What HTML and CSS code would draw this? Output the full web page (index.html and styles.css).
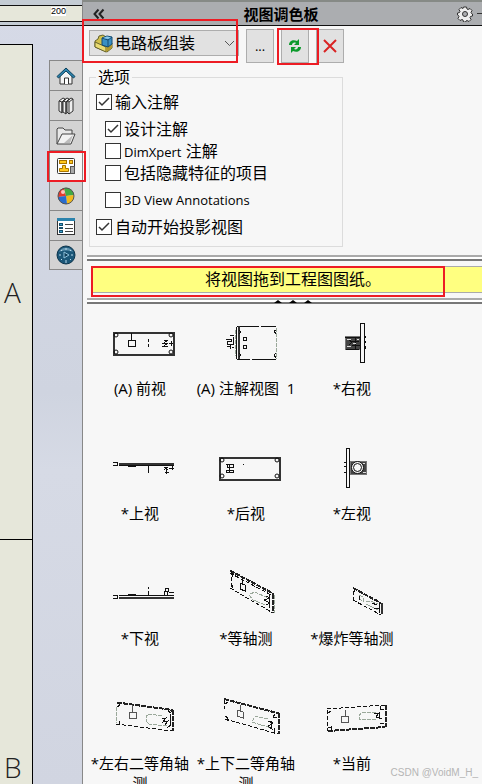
FILE: index.html
```html
<!DOCTYPE html>
<html lang="zh-CN">
<head>
    <meta charset="utf-8">
    <meta name="viewport" content="width=device-width, initial-scale=1.0">
    <title>视图调色板</title>
    <link rel="stylesheet" href="styles.css">
</head>
<body>
    <div class="workspace">
        <div class="ruler"><span class="ruler-num">200</span></div>
        <div class="canvas">
            <div class="sheet">
                <div class="zone zone-a">A</div>
                <div class="zone zone-b">B</div>
            </div>
            <nav class="tabs">
                <button type="button" class="tab" aria-label="主页">
                    <svg width="20" height="20" viewBox="0 0 20 20"><path d="M4 9v9h12V9l-6-5z" fill="#f4f4f4" stroke="#333"/><path d="M8.500 18v-6h4v6" fill="#fff" stroke="#333"/><path d="M1 10.500L10 2l9 8.500-1.500 1.500L10 5l-7.500 7z" fill="#2d83ad" stroke="#0e415c"/></svg>
                </button>
                <button type="button" class="tab" aria-label="设计库">
                    <svg width="20" height="20" viewBox="0 0 20 20"><g fill="#eee" stroke="#333"><path d="M11 5l4-3 2 1v12l-4 3-2-2z"/><path d="M7 5l4-3 2 1-3 3v12l-3-2z"/><path d="M3 5l4-3 2 1-3 3v11l-3-2z"/><path d="M3 5l3 1v11M7 5l3 1v12M11 5l2 1v12M13 6l4-3M6 6l4-3M10 6l4-3" fill="none"/></g></svg>
                </button>
                <button type="button" class="tab" aria-label="文件探索器">
                    <svg width="20" height="20" viewBox="0 0 20 20"><path d="M1 18V3l1-1h5l2 2h7v4" fill="#e8e8e8" stroke="#444"/><path d="M1 18l5-10h13l-4 10z" fill="#f2f2f2" stroke="#444"/><path d="M8 17l9-8-3 8z" fill="#bbb"/></svg>
                </button>
                <button type="button" class="tab tab-active" aria-label="视图调色板">
                    <svg width="20" height="20" viewBox="0 0 20 20"><rect x="1.500" y="2.500" width="17" height="15" rx="1" fill="#fff" stroke="#333"/><g fill="#ffc81e" stroke="#a87400"><rect x="3.500" y="4.500" width="7" height="3"/><rect x="13.500" y="4.500" width="3" height="3"/><path d="M6.500 9.500h3v3h3v3h-9v-3h3z"/></g><rect x="14.500" y="10.500" width="4" height="7" fill="#aaa" stroke="#555"/></svg>
                    <span class="mark mark-tab"></span>
                </button>
                <button type="button" class="tab" aria-label="外观">
                    <svg width="20" height="20" viewBox="0 0 20 20"><path d="M10 10L8 2a8 8 0 0 0-6 9z" fill="#e33b2e"/><path d="M10 10L8 2a8 8 0 0 1 10 7z" fill="#42a944"/><path d="M10 10l8-1a8 8 0 0 1-7 9z" fill="#f0b91d"/><path d="M10 10l1 8a8 8 0 0 1-9-7z" fill="#286ccf"/><circle cx="7" cy="6" r="2" fill="#fff" opacity=".7"/><circle cx="10" cy="10" r="8" fill="none" stroke="#555"/></svg>
                </button>
                <button type="button" class="tab" aria-label="自定义属性">
                    <svg width="20" height="20" viewBox="0 0 20 20"><rect x="1.500" y="2.500" width="17" height="16" fill="#fff" stroke="#333"/><path d="M1 2h18v3H1z" fill="#2c83ac"/><g fill="#3da0cd" stroke="#17506d"><rect x="3.500" y="7.500" width="3" height="2"/><rect x="3.500" y="11.500" width="3" height="1"/><rect x="3.500" y="14.500" width="3" height="2"/></g><path d="M9 8.500h8M9 12.500h8M9 15.500h8" stroke="#444"/></svg>
                </button>
                <button type="button" class="tab" aria-label="论坛">
                    <svg width="20" height="20" viewBox="0 0 20 20"><circle cx="10" cy="10" r="9" fill="#1b5778" stroke="#0c344b"/><path d="M3 7a8 8 0 0 1 14 0c-4-2-10-2-14 0z" fill="#6296b1"/><path d="M8 7l5 3-5 3z" fill="#103e58" stroke="#8ec2dc"/><path d="M10 3v2M3 10h2M15 10h2M10 15v3M5 5l1 1M15 5l-1 1M5 15l1-1M15 15l-1-1" stroke="#b7d8e8"/></svg>
                </button>
            </nav>
        </div>
    </div>

    <main class="panel">
        <header class="panel-head">
            <button type="button" class="head-btn" aria-label="折叠">
                <svg width="12" height="12" viewBox="0 0 12 12"><path d="M5.500 1.500L1.500 6l4 4.500M10.500 1.500L6.500 6l4 4.500" fill="none" stroke="#222" stroke-width="2"/></svg>
            </button>
            <h1 class="panel-title">视图调色板</h1>
            <button type="button" class="head-btn" aria-label="设置">
                <svg width="16" height="16" viewBox="0 0 16 16"><path d="M6.500 1h3l.5 2 1 .5 2-1 2 2-1 2 .5 1 1 .5v2l-2 .5-.5 1 1 2-2 2-2-1-1 .5-.5 1h-2L6 14l-1-.500-2 1-2-2 1-2-.500-1L.500 9V7l2-.500.500-1-1-2 2-2 2 1z" fill="#eee" stroke="#333"/><circle cx="8" cy="8" r="2.500" fill="#abadb0" stroke="#333"/></svg>
            </button>
            <span class="head-dash"></span>
        </header>

        <div class="toolbar">
            <div class="picker">
                <svg class="picker-icon" width="19" height="19" viewBox="0 0 19 19"><path d="M1 7l3-2 1-3 4-1 3 2v4l6 2v5l-5 4L1 13z" fill="#d2c14b" stroke="#66642d"/><path d="M1 8l11 5v5L1 13z" fill="#eadc72" stroke="#66642d"/><path d="M12 13l6-3v4l-6 4z" fill="#b19a30"/><path d="M8 4l5-2 5 1v7l-4 3-6-2z" fill="#3990c4" stroke="#164c72"/><path d="M8 4l6 2v7M14 6l4-3" fill="none" stroke="#164c72"/><path d="M9 4l4-1.500 4 1-3 1.500z" fill="#8ccaea"/></svg>
                <select class="picker-select" aria-label="零件">
                    <option>电路板组装</option>
                </select>
                <svg class="picker-arrow" width="11" height="7" viewBox="0 0 11 7"><path d="M1 1l4.500 4.500L10 1" fill="none" stroke="#555"/></svg>
                <span class="mark mark-picker"></span>
            </div>
            <button type="button" class="tool">...</button>
            <button type="button" class="tool" aria-label="刷新">
                <svg width="14" height="16" viewBox="0 0 14 16"><g fill="#0b9a2b"><path d="M1 7c0-4 4-6 8-4l2-2v6H6l2-2C6 4 4 5 4 7z"/><path d="M13 9c0 4-4 6-8 4l-2 2V9h5l-2 2c2 1 4 0 4-2z"/></g></svg>
                <span class="mark mark-tool"></span>
            </button>
            <button type="button" class="tool" aria-label="全部清除">
                <svg width="14" height="14" viewBox="0 0 14 14"><path d="M1 1l12 12M13 1L1 13" stroke="#d92323" stroke-width="2"/></svg>
            </button>
        </div>

        <fieldset class="options">
            <legend>选项</legend>
            <label class="opt"><input type="checkbox" checked>输入注解</label>
            <label class="opt opt-sub opt-gap"><input type="checkbox" checked>设计注解</label>
            <label class="opt opt-sub"><input type="checkbox"><span><span class="latin">DimXpert</span> 注解</span></label>
            <label class="opt opt-sub"><input type="checkbox">包括隐藏特征的项目</label>
            <label class="opt opt-sub opt-gap"><input type="checkbox"><span class="latin">3D View Annotations</span></label>
            <label class="opt opt-gap"><input type="checkbox" checked>自动开始投影视图</label>
        </fieldset>

        <div class="splitter"></div>
        <div class="hint">
            <p class="hint-text">将视图拖到工程图图纸。</p>
            <span class="mark mark-hint"></span>
        </div>
        <div class="splitter splitter-grip">
            <svg width="38" height="3" viewBox="0 0 38 3"><path d="M0 3l4-3 4 3zM15 3l4-3 4 3zM30 3l4-3 4 3z"/></svg>
        </div>

        <section class="views">
            <figure class="view">
                <svg class="thumb" viewBox="0 0 80 70"><rect class="thick" x="13.500" y="24.500" width="60" height="22"/><circle cx="16" cy="27" r="2"/><circle cx="71" cy="27" r="2"/><circle cx="16" cy="44" r="2"/><circle cx="71" cy="44" r="2"/><path d="M31.500 25v7M28.500 32.500h7v6h-7zM48.500 31v3M48.500 36v3M64 32h4l-4 3h4l-4 3h4M69 35h4M71 33v5"/></svg>
                <figcaption>(A) 前视</figcaption>
            </figure>
            <figure class="view">
                <svg class="thumb" viewBox="0 0 80 70"><path d="M31 18.500h22M55 18.500h15M31 51.500h13M46 51.500h24M30.500 19v32"/><path class="thick" d="M32.500 18v33"/><path class="soft" d="M70.500 20v31M29.500 22v26"/><path d="M33 22l2 2-2 2M70 22l-2 1 2 3M33 45l2 2-2 2M70 45l-2 2 2 3M37.500 29.500h3v3h-3zM37.500 37.500h3v3h-3zM20 31h5v2h-4v3h6M27 29v8M21 39l3-1v3M26 39h2M24 27l4 1"/></svg>
                <figcaption>(A) 注解视图  1</figcaption>
            </figure>
            <figure class="view">
                <svg class="thumb" viewBox="0 0 80 70"><rect x="33" y="28" width="15" height="13" class="chip"/><path d="M33 29h15M34 41h13M37 32l3 2-3 3M43 29v12M40 33h7M40 37h8M53 28v2M53 33v2M53 38v3"/><path class="white" d="M35 31h4M41 35h3M35 38h4M45 31h2"/><rect class="slab" x="48.500" y="15.500" width="4" height="39" rx="1"/></svg>
                <figcaption>*右视</figcaption>
            </figure>
            <figure class="view">
                <svg class="thumb" viewBox="0 0 80 70"><path class="thick" d="M19 30.500h55"/><path d="M13 29.500h4v3h-4M19 32.500h55M28 33h8M48.500 33v7M64 34l4 3M68 34l-4 3M66.500 37v4M69 35.500h5M72 33v4M65 39.500h4"/></svg>
                <figcaption>*上视</figcaption>
            </figure>
            <figure class="view">
                <svg class="thumb" viewBox="0 0 80 70"><rect class="thick" x="13.500" y="24.500" width="60" height="22"/><circle cx="16" cy="27" r="2"/><circle cx="71" cy="27" r="2"/><circle cx="16" cy="43" r="2"/><circle cx="71" cy="43" r="2"/><path d="M21 31.500h6v3h-5zM20 37.500h7v2h-7zM23 31v9M37 31h1"/></svg>
                <figcaption>*后视</figcaption>
            </figure>
            <figure class="view">
                <svg class="thumb" viewBox="0 0 80 70"><rect x="38" y="28" width="16" height="13" class="chip"/><circle class="slab" cx="45.500" cy="34.500" r="6"/><circle cx="45.500" cy="34.500" r="4"/><path class="white" d="M51 30h2M51 39h3"/><path d="M32 29h2M32 33h2M32 39h2"/><rect class="slab" x="34.500" y="15.500" width="3" height="39"/></svg>
                <figcaption>*左视</figcaption>
            </figure>
            <figure class="view">
                <svg class="thumb" viewBox="0 0 80 70"><path class="thick" d="M19 39.500h55"/><path d="M13 37.500h4v3h-4M19 37.500h55M28 36.500h8M48.500 29v2M48.500 33v4M65 30h3v3h-3zM64 33v4M67 33v4M69 34.500h5"/></svg>
                <figcaption>*下视</figcaption>
            </figure>
            <figure class="view">
                <svg class="thumb" viewBox="0 0 80 70"><path class="edge" d="M24 12.500L68 36"/><path class="dash" d="M24 15L67 38M24 30l43 25M25 13v18"/><path class="edge" d="M66.500 36v19"/><path class="soft" d="M68.500 37v18M44 36l5-2 13 6M43 37l4 5 12 5"/><path d="M36 20v6M34 25l5 2v6l-5-2zM26 15v4M26 27v3M60 38l4 2-6 2 6 3-4 2M63 36v14"/></svg>
                <figcaption>*等轴测</figcaption>
            </figure>
            <figure class="view">
                <svg class="thumb" viewBox="0 0 80 70"><path class="edge" d="M41 30l28 15"/><path class="dash" d="M41 42l28 15M41 33v9"/><path class="thick" d="M69.500 45v11"/><path class="soft" d="M47 37l4 2v4l-4-2zM54 44l5-1 7 3M54 46l12 6"/><path d="M42 31v3M60 45l5 2M67 45v10M62 50h5M47 38v4"/></svg>
                <figcaption>*爆炸等轴测</figcaption>
            </figure>
            <figure class="view">
                <svg class="thumb" viewBox="0 0 80 70"><path class="edge" d="M17 19.500L73 27"/><path class="dash" d="M16 41l56 7"/><path class="soft" d="M16.500 24v16"/><path class="edge" d="M72.500 27v21"/><path class="soft" d="M62 33l-12-2-4 2v5l3 3 18 2"/><path d="M32.500 22v7M29.500 29.500h7v6h-7z" class="mid"/><path d="M17 24l3-2-2-2M17 42l3-1-1-3M68 27l2 3 2-2M67 45l4-3M62 36l4-1-3 4 5-1-3 4M70 31v12"/></svg>
                <figcaption>*左右二等角轴测</figcaption>
            </figure>
            <figure class="view">
                <svg class="thumb" viewBox="0 0 80 70"><path class="edge" d="M18 16l55 14.500"/><path class="dash" d="M19 36l53 15M18.500 17v9"/><path class="edge" d="M72.500 30v21"/><path class="soft" d="M62 36l-13-3-3 6 19 6"/><path d="M34.500 22v6M31 27l6 2v6l-6-2z" class="mid"/><path d="M19 21l3-2M19 33l3 2-1 3M69 31l-2 3 4 1M62 38l5 2-5 3 5 4M65 38v7M68 45v4"/></svg>
                <figcaption>*上下二等角轴测</figcaption>
            </figure>
            <figure class="view">
                <svg class="thumb" viewBox="0 0 80 70"><path class="edge" d="M16 48l57-4"/><path class="dash" d="M15 26l58-4M15.500 27v21"/><path class="edge" d="M73.500 22v22"/><path class="soft" d="M64 29l-15 1-2 3 1 4 17-1"/><path d="M33.500 27v6M29.500 33.500h7v6h-7z" class="mid"/><path d="M16 30l3-2M16 45l3-1v4M69 23l-1 3 4 1M62 31l5-1-3 4 6 2M67 30v5M68 41l4-1"/></svg>
                <figcaption>*当前</figcaption>
            </figure>
        </section>
        <span class="watermark">CSDN @VoidM_H_</span>
    </main>
</body>
</html>
```
FILE: styles.css
```css
* {
    box-sizing: border-box;
}
body {
    margin: 0;
    height: 100vh;
    display: flex;
    overflow: hidden;
    font-family: "Open Sans", "Noto Sans CJK SC", sans-serif;
    font-size: 16px;
    color: #000;
    background: #f7f7f7;
}
button {
    margin: 0;
    padding: 0;
    font-family: inherit;
    color: inherit;
}
svg {
    display: block;
}

/* drawing area */
.workspace {
    flex: 0 0 82px;
    display: flex;
    flex-direction: column;
    background: linear-gradient(#d6dae7, #cfd4e0 50%, #d6dae5 60%, #d1d5e1);
}
.ruler {
    height: 26px;
    padding: 2px 16px 0 0;
    display: flex;
    align-items: flex-start;
    justify-content: flex-end;
    border-top: 5px solid #c4ccd4;
    border-bottom: 1px solid #111;
    background: linear-gradient(#111 1px, #e6e7da 1px, #e6e7da 16px, #111 16px, #111 17px, #c4ccd4 17px);
}
.ruler-num {
    font-family: "Liberation Sans", sans-serif;
    font-size: 9px;
    line-height: 9px;
    background: #fff;
}
.canvas {
    flex: 1;
    min-height: 0;
    display: flex;
    justify-content: space-between;
}
.sheet {
    width: 33px;
    margin-top: 18px;
    display: flex;
    flex-direction: column;
    border-top: 1px solid #000;
    border-right: 1px solid #000;
    background: #e6e7da;
}
.zone {
    display: flex;
    padding-left: 4px;
    font-size: 28px;
    line-height: 34px;
    font-weight: 300;
    color: #222;
}
.zone-a {
    flex: 0 0 495px;
    align-items: center;
    border-bottom: 1px solid #000;
}
.zone-b {
    flex: 1;
    align-items: flex-end;
}

/* task pane tabs */
.tabs {
    width: 33px;
    margin-top: 34px;
    display: flex;
    flex-direction: column;
}
.tab {
    position: relative;
    height: 30px;
    display: flex;
    align-items: center;
    justify-content: center;
    border: 1px solid #888;
    border-width: 1px 0 0 1px;
    background: #d3d3d3;
}
.tab:last-child {
    border-bottom-width: 1px;
}
.tab-active {
    background: #f7f7f7;
}

/* red call-out frames */
.mark {
    position: absolute;
    border: 2px solid #ed1c24;
    pointer-events: none;
    z-index: 1;
}
.mark-tab {
    inset: 0 -4px -2px -3px;
}
.mark-picker {
    inset: -12px 0 -8px -8px;
}
.mark-tool {
    inset: -2px -11px -3px -5px;
}
.mark-hint {
    inset: 0 37px -4px 0;
}

/* view palette */
.panel {
    position: relative;
    flex: 1;
    min-width: 0;
    border-left: 1px solid #888;
}
.panel-head {
    height: 26px;
    padding-left: 10px;
    display: flex;
    align-items: center;
    border-top: 2px solid #868a86;
    border-bottom: 1px solid #111;
    background: #abadb0;
}
.head-btn {
    border: 0;
    background: none;
}
.panel-title {
    flex: 1;
    margin: 0;
    text-align: center;
    font-size: 15px;
    line-height: 20px;
    font-weight: bold;
}
.head-dash {
    width: 5px;
    height: 1px;
    margin-left: 4px;
    background: #333;
}
.toolbar {
    display: flex;
    align-items: flex-start;
    gap: 7px;
    padding: 3px 6px 0;
}
.picker {
    position: relative;
    width: 150px;
    height: 26px;
    margin-top: 1px;
    padding-left: 4px;
    display: flex;
    align-items: center;
    gap: 2px;
    border: 1px solid #adadad;
    background: #e1e1e1;
}
.picker-select {
    flex: 1;
    min-width: 0;
    height: 24px;
    padding: 0;
    border: 0;
    appearance: none;
    background: none;
    font: inherit;
    line-height: 24px;
    color: inherit;
}
.picker-arrow {
    position: absolute;
    right: 3px;
    top: 9px;
    pointer-events: none;
}
.tool {
    position: relative;
    width: 28px;
    height: 34px;
    display: flex;
    align-items: center;
    justify-content: center;
    border: 1px solid #adadad;
    background: #e1e1e1;
    font-size: 13px;
}
.options {
    width: 254px;
    margin: 4px 0 0 6px;
    padding: 4px 6px 8px;
    border: 1px solid #dcdcdc;
}
.options legend {
    padding: 0 2px;
    line-height: 20px;
}
.opt {
    height: 22px;
    display: flex;
    align-items: center;
    gap: 3px;
    white-space: nowrap;
    line-height: 22px;
}
.opt-sub {
    padding-left: 9px;
}
.opt-gap {
    margin-top: 5px;
}
.opt input {
    width: 16px;
    height: 16px;
    margin: 0;
    appearance: none;
    border: 1px solid #333;
    background: #fff;
}
.opt input:checked {
    background: #fff url("data:image/svg+xml,%3Csvg xmlns='http://www.w3.org/2000/svg' viewBox='0 0 14 14'%3E%3Cpath d='M2 7l3 3 7-7' fill='none' stroke='%23333' stroke-width='1.500'/%3E%3C/svg%3E");
}
.latin {
    font-size: 13px;
}
.splitter {
    height: 6px;
    margin: 8px 0 0 4px;
    border: 2px solid #777;
    border-width: 2px 0;
    border-top-color: #aaa;
    background: #fff;
}
.splitter-grip {
    padding-left: 16px;
    display: flex;
    justify-content: center;
}
.hint {
    position: relative;
    margin: 5px 0 -3px 8px;
}
.hint-text {
    margin: 0;
    padding-left: 12px;
    text-align: center;
    line-height: 25px;
    border: 1px solid #aaa;
    border-right: 0;
    background: #ffff80;
}
.views {
    display: grid;
    grid-template-columns: repeat(auto-fill, 106px);
    grid-auto-rows: 125px;
    margin: 4px 0 0 4px;
}
.view {
    margin: 0;
    text-align: center;
    font-size: 15px;
    line-height: 20px;
}
.view figcaption {
    white-space: pre-wrap;
}
.thumb {
    width: 80px;
    height: 70px;
    margin: 0 auto;
    fill: none;
    stroke: #111;
    shape-rendering: crispEdges;
}
.thumb circle {
    shape-rendering: auto;
}
.thick {
    stroke-width: 2;
    stroke: #333;
}
.edge {
    stroke-width: 2;
    stroke: #222;
    stroke-dasharray: 5 1;
}
.soft {
    stroke: #9aa89a;
    stroke-dasharray: 4 1;
}
.mid {
    stroke: #555;
}
.dash {
    stroke-dasharray: 4 2;
}
.chip {
    fill: #444;
    stroke: #777;
}
.white {
    stroke: #ddd;
}
.slab {
    fill: #f7f7f7;
}
.watermark {
    position: absolute;
    right: 4px;
    bottom: 4px;
    font-family: "Liberation Sans", sans-serif;
    font-size: 10px;
    line-height: 14px;
    color: #b5b5b5;
}
```
